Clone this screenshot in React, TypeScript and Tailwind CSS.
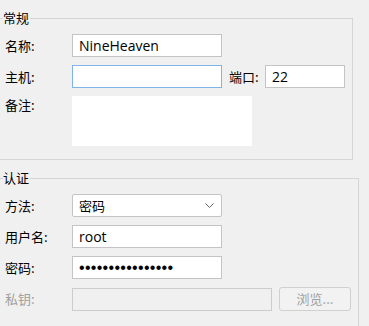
import React from "react";

const cjk = "font-['Noto_Sans_CJK_SC',sans-serif]";
const latin = "font-['Open_Sans','Noto_Sans_CJK_SC',sans-serif]";

const Label = ({ text, disabled }: { text: string; disabled?: boolean }) => (
  <span className={`w-[67px] shrink-0 ${cjk} text-[13px] leading-[18px] ${disabled ? "text-[#a0a0a0]" : "text-black"}`}>
    {text}
  </span>
);

const Field = ({ value, className = "" }: { value: string; className?: string }) => (
  <div className={`h-[23px] border border-[#c4c4c4] bg-white pl-[6px] flex items-center ${latin} text-[14px] text-black ${className}`}>
    {value}
  </div>
);

const App = () => {
  return (
    <div className="w-[369px] h-[326px] bg-[#f0f0f0] overflow-hidden">
      {/* 常规 */}
      <fieldset className="mt-[9px] w-[353px] border border-l-0 border-[#d5d5d5]">
        <legend className={`ml-[3px] pr-[1px] ${cjk} text-[13px] leading-[18px] text-black`}>常规</legend>
        <div className="pl-[5px] pt-[7px] pb-[13px] flex flex-col gap-[8px]">
          <div className="flex items-center">
            <Label text="名称:" />
            <Field value="NineHeaven" className="w-[150px]" />
          </div>
          <div className="flex items-center">
            <Label text="主机:" />
            <div className="w-[150px] h-[23px] border border-[#7eb4ea] bg-white" />
            <span className={`ml-[7px] w-[36px] ${cjk} text-[13px] leading-[18px] text-black`}>端口:</span>
            <Field value="22" className="w-[80px]" />
          </div>
          <div className="flex items-start">
            <Label text="备注:" />
            <div className="w-[180px] h-[50px] bg-white" />
          </div>
        </div>
      </fieldset>

      {/* 认证 */}
      <fieldset className="mt-[9px] w-[359px] border border-l-0 border-[#d5d5d5]">
        <legend className={`ml-[3px] pr-[1px] ${cjk} text-[13px] leading-[18px] text-black`}>认证</legend>
        <div className="pl-[5px] pt-[7px] pb-[30px] flex flex-col gap-[8px]">
          <div className="flex items-center">
            <Label text="方法:" />
            <div className={`w-[150px] h-[23px] border border-[#c4c4c4] rounded-[2px] bg-white pl-[6px] pr-[7px] flex items-center justify-between ${cjk} text-[13px] text-black`}>
              <span>密码</span>
              <svg width="9" height="5" viewBox="0 0 9 5" fill="none">
                <path d="M0.5 0.5L4.5 4.5L8.5 0.5" stroke="#606060" strokeWidth="1" />
              </svg>
            </div>
          </div>
          <div className="flex items-center">
            <Label text="用户名:" />
            <Field value="root" className="w-[150px]" />
          </div>
          <div className="flex items-center">
            <Label text="密码:" />
            <div className="w-[150px] h-[23px] border border-[#c4c4c4] bg-white pl-[6px] flex items-center font-['Liberation_Sans',sans-serif] text-[16px] tracking-[0.3px] text-black">
              ••••••••••••••••
            </div>
          </div>
          <div className="flex items-center">
            <Label text="私钥:" disabled />
            <div className="w-[200px] h-[23px] border border-[#cccccc] bg-[#f0f0f0]" />
            <button className={`ml-[7px] w-[72px] h-[24px] border border-[#d0d0d0] rounded-[3px] bg-[#f2f2f2] ${cjk} text-[13px] text-[#a0a0a0]`}>
              浏览...
            </button>
          </div>
        </div>
      </fieldset>
    </div>
  );
};

export default App;
